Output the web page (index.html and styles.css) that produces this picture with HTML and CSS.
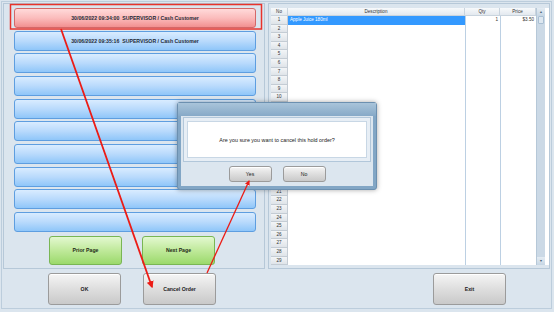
FILE: index.html
```html
<!DOCTYPE html>
<html>
<head>
    <title>Hold Orders</title>
    <link rel="stylesheet" href="styles.css">
</head>
<body>
    <div class="screen">
        <div class="window">
            <div class="main">
                <div class="hold-panel">
                    <div class="hold-list">
                        <button class="hold hold-active">30/06/2022 09:34:00&nbsp; SUPERVISOR / Cash Customer</button>
                        <button class="hold">30/06/2022 09:35:16&nbsp; SUPERVISOR / Cash Customer</button>
                        <button class="hold"></button>
                        <button class="hold"></button>
                        <button class="hold"></button>
                        <button class="hold"></button>
                        <button class="hold"></button>
                        <button class="hold"></button>
                        <button class="hold"></button>
                        <button class="hold"></button>
                    </div>
                    <div class="pager">
                        <button class="btn-green">Prior Page</button>
                        <button class="btn-green">Next Page</button>
                    </div>
                </div>

                <div class="grid-panel">
                    <div class="grid">
                        <div class="grid-table">
                            <div class="grid-row grid-head">
                                <div class="c-no">No</div>
                                <div>Description</div>
                                <div>Qty</div>
                                <div>Price</div>
                            </div>
                            <div class="grid-row">
                                <div class="c-no">1</div>
                                <div class="c-desc selected">Apple Juice 180ml</div>
                                <div class="c-num">1</div>
                                <div class="c-num">$3.50</div>
                            </div>
                            <div class="grid-row"><div class="c-no">2</div><div class="c-desc"></div><div class="c-num"></div><div class="c-num"></div></div>
                            <div class="grid-row"><div class="c-no">3</div><div class="c-desc"></div><div class="c-num"></div><div class="c-num"></div></div>
                            <div class="grid-row"><div class="c-no">4</div><div class="c-desc"></div><div class="c-num"></div><div class="c-num"></div></div>
                            <div class="grid-row"><div class="c-no">5</div><div class="c-desc"></div><div class="c-num"></div><div class="c-num"></div></div>
                            <div class="grid-row"><div class="c-no">6</div><div class="c-desc"></div><div class="c-num"></div><div class="c-num"></div></div>
                            <div class="grid-row"><div class="c-no">7</div><div class="c-desc"></div><div class="c-num"></div><div class="c-num"></div></div>
                            <div class="grid-row"><div class="c-no">8</div><div class="c-desc"></div><div class="c-num"></div><div class="c-num"></div></div>
                            <div class="grid-row"><div class="c-no">9</div><div class="c-desc"></div><div class="c-num"></div><div class="c-num"></div></div>
                            <div class="grid-row"><div class="c-no">10</div><div class="c-desc"></div><div class="c-num"></div><div class="c-num"></div></div>
                            <div class="grid-row"><div class="c-no">11</div><div class="c-desc"></div><div class="c-num"></div><div class="c-num"></div></div>
                            <div class="grid-row"><div class="c-no">12</div><div class="c-desc"></div><div class="c-num"></div><div class="c-num"></div></div>
                            <div class="grid-row"><div class="c-no">13</div><div class="c-desc"></div><div class="c-num"></div><div class="c-num"></div></div>
                            <div class="grid-row"><div class="c-no">14</div><div class="c-desc"></div><div class="c-num"></div><div class="c-num"></div></div>
                            <div class="grid-row"><div class="c-no">15</div><div class="c-desc"></div><div class="c-num"></div><div class="c-num"></div></div>
                            <div class="grid-row"><div class="c-no">16</div><div class="c-desc"></div><div class="c-num"></div><div class="c-num"></div></div>
                            <div class="grid-row"><div class="c-no">17</div><div class="c-desc"></div><div class="c-num"></div><div class="c-num"></div></div>
                            <div class="grid-row"><div class="c-no">18</div><div class="c-desc"></div><div class="c-num"></div><div class="c-num"></div></div>
                            <div class="grid-row"><div class="c-no">19</div><div class="c-desc"></div><div class="c-num"></div><div class="c-num"></div></div>
                            <div class="grid-row"><div class="c-no">20</div><div class="c-desc"></div><div class="c-num"></div><div class="c-num"></div></div>
                            <div class="grid-row"><div class="c-no">21</div><div class="c-desc"></div><div class="c-num"></div><div class="c-num"></div></div>
                            <div class="grid-row"><div class="c-no">22</div><div class="c-desc"></div><div class="c-num"></div><div class="c-num"></div></div>
                            <div class="grid-row"><div class="c-no">23</div><div class="c-desc"></div><div class="c-num"></div><div class="c-num"></div></div>
                            <div class="grid-row"><div class="c-no">24</div><div class="c-desc"></div><div class="c-num"></div><div class="c-num"></div></div>
                            <div class="grid-row"><div class="c-no">25</div><div class="c-desc"></div><div class="c-num"></div><div class="c-num"></div></div>
                            <div class="grid-row"><div class="c-no">26</div><div class="c-desc"></div><div class="c-num"></div><div class="c-num"></div></div>
                            <div class="grid-row"><div class="c-no">27</div><div class="c-desc"></div><div class="c-num"></div><div class="c-num"></div></div>
                            <div class="grid-row"><div class="c-no">28</div><div class="c-desc"></div><div class="c-num"></div><div class="c-num"></div></div>
                            <div class="grid-row"><div class="c-no">29</div><div class="c-desc"></div><div class="c-num"></div><div class="c-num"></div></div>
                        </div>
                        <div class="scrollbar">
                            <div class="scroll-btn">&#9650;</div>
                            <div class="scroll-thumb"></div>
                            <div class="scroll-track"></div>
                            <div class="scroll-btn">&#9660;</div>
                        </div>
                    </div>
                </div>
            </div>

            <div class="actions">
                <button class="btn-gray">OK</button>
                <button class="btn-gray">Cancel Order</button>
                <button class="btn-gray btn-exit">Exit</button>
            </div>
        </div>

        <!-- confirm dialog -->
        <div class="dialog">
            <div class="dialog-title"></div>
            <div class="dialog-body">
                <div class="dialog-group">
                    <div class="dialog-msg">Are you sure you want to cancel this hold order?</div>
                </div>
                <div class="dialog-buttons">
                    <button class="btn-gray btn-small">Yes</button>
                    <button class="btn-gray btn-small">No</button>
                </div>
            </div>
        </div>

        <!-- annotation marks -->
        <svg class="marks" width="554" height="312" viewBox="0 0 554 312">
            <defs>
                <marker id="head" viewBox="0 0 10 10" refX="8" refY="5" markerWidth="4" markerHeight="4" orient="auto">
                    <path d="M0 0 L10 5 L0 10 Z" fill="#ec1c16"/>
                </marker>
            </defs>
            <rect x="10.5" y="4.5" width="251" height="24.5" fill="none" stroke="#e8332b" stroke-width="1.5"/>
            <line x1="61" y1="29" x2="152" y2="287" stroke="#ec1c16" stroke-width="1.8" marker-end="url(#head)"/>
            <line x1="207" y1="273" x2="249" y2="181" stroke="#ec1c16" stroke-width="1.3" marker-end="url(#head)"/>
        </svg>
    </div>
</body>
</html>
```

FILE: styles.css
```css
body {
    margin: 0;
    font-family: "Liberation Sans", Arial, sans-serif;
}
button {
    font-family: "Liberation Sans", Arial, sans-serif;
    padding: 0;
    cursor: pointer;
}
.screen {
    position: relative;
    width: 554px;
    height: 312px;
    box-sizing: border-box;
    padding: 1px;
    background-color: #dbe5ee;
    overflow: hidden;
}
.window {
    width: 551px;
    height: 308px;
    box-sizing: border-box;
    border: 1px solid #bccddc;
    padding: 1px 0 0 1px;
}
.main {
    display: flex;
    gap: 3px;
    height: 266px;
}

/* left side: hold orders */
.hold-panel {
    width: 262px;
    box-sizing: border-box;
    border: 1px solid #b6c8d8;
    padding: 4px 8px 0 10px;
}
.hold-list {
    display: flex;
    flex-direction: column;
    gap: 2.67px;
}
.hold {
    height: 20px;
    border: 1px solid #5e9ee0;
    border-radius: 3px;
    background: linear-gradient(#d9ecff, #b9dafc 50%, #8fc6f9);
    font-size: 5.2px;
    font-weight: bold;
    color: #1e2a36;
}
.hold-active {
    border-color: #d46868;
    background: linear-gradient(#ffdada, #fbbcbc 50%, #f29090);
}
.pager {
    display: flex;
    gap: 20px;
    padding-left: 35px;
    margin-top: 4px;
}
.btn-green {
    width: 73px;
    height: 29px;
    border: 1px solid #79b654;
    border-radius: 3px;
    background: linear-gradient(#e3f8d0, #bfe99a 50%, #9bd96b);
    font-size: 5.2px;
    font-weight: bold;
    color: #1e2a16;
}

/* right side: items grid */
.grid-panel {
    width: 282px;
    box-sizing: border-box;
    border: 1px solid #b6c8d8;
    padding: 4px 0 0 2px;
}
.grid {
    display: flex;
    height: 257px;
    background: #fff;
}
.grid-table {
    width: 265px;
}
.grid-row {
    display: grid;
    grid-template-columns: 17px 177px 35px 36px;
    height: 8.6px;
    font-size: 4.6px;
    color: #333;
}
.grid-row > div {
    box-sizing: border-box;
    line-height: 8px;
    overflow: hidden;
    white-space: nowrap;
}
.grid-head {
    height: 8px;
}
.grid-head > div {
    text-align: center;
    background: linear-gradient(#f7f9fb, #e3e9ef);
    border-right: 1px solid #c9d4de;
    border-bottom: 1px solid #c9d4de;
}
.c-no {
    text-align: center;
    background: linear-gradient(#f3f5f7, #dfe4e9);
    border-right: 1px solid #c4ccd4;
    border-bottom: 1px solid #c4ccd4;
}
.c-desc {
    padding-left: 2px;
}
.c-num {
    text-align: right;
    padding-right: 2px;
    border-left: 1px solid #bcd0e3;
}
.selected {
    background-color: #3399ff;
    color: #fff;
}
.scrollbar {
    width: 8px;
    display: flex;
    flex-direction: column;
    background: #cbd9e6;
    border-left: 1px solid #b6c8d8;
}
.scroll-btn {
    height: 8px;
    font-size: 3.5px;
    line-height: 8px;
    text-align: center;
    color: #4d6378;
    background: linear-gradient(#e4ecf3, #c6d6e4);
}
.scroll-thumb {
    height: 6px;
    margin: 0 1px;
    border: 1px solid #a9bfd3;
    border-radius: 1px;
    background: #dde7f0;
}
.scroll-track {
    flex: 1;
}

/* bottom buttons */
.actions {
    display: flex;
    gap: 22px;
    margin-top: 4px;
    padding: 0 45px 0 45px;
}
.btn-gray {
    width: 73px;
    height: 32px;
    border: 1px solid #9b9b9b;
    border-radius: 3px;
    background: linear-gradient(#f5f5f5, #dedede 50%, #c9c9c9);
    box-shadow: inset 0 1px 0 #fff;
    font-size: 5.2px;
    font-weight: bold;
    color: #222;
}
.btn-exit {
    margin-left: auto;
}

/* confirm dialog */
.dialog {
    position: absolute;
    left: 177px;
    top: 102px;
    width: 200px;
    height: 88px;
    box-sizing: border-box;
    border: 1px solid #6c90b0;
    border-radius: 3px;
    background: #82a6c5;
    box-shadow: 0 0 5px rgba(0, 0, 0, 0.35);
}
.dialog-title {
    height: 13px;
    background: linear-gradient(#a9c4da, #86a9c7);
}
.dialog-body {
    margin: 0 3px;
    padding: 1px 2px 4px;
    background: #dce6ef;
}
.dialog-group {
    height: 45px;
    box-sizing: border-box;
    padding: 3px;
    border: 1px solid #b2c7da;
    background: #e7eef5;
}
.dialog-msg {
    height: 100%;
    box-sizing: border-box;
    border: 1px solid #c8d7e5;
    background: #fff;
    display: flex;
    align-items: center;
    justify-content: center;
    font-size: 5.4px;
    color: #222;
}
.dialog-buttons {
    display: flex;
    justify-content: center;
    gap: 11px;
    margin-top: 4px;
}
.btn-small {
    width: 43px;
    height: 16px;
    font-weight: normal;
}

.marks {
    position: absolute;
    left: 0;
    top: 0;
    pointer-events: none;
}
```
